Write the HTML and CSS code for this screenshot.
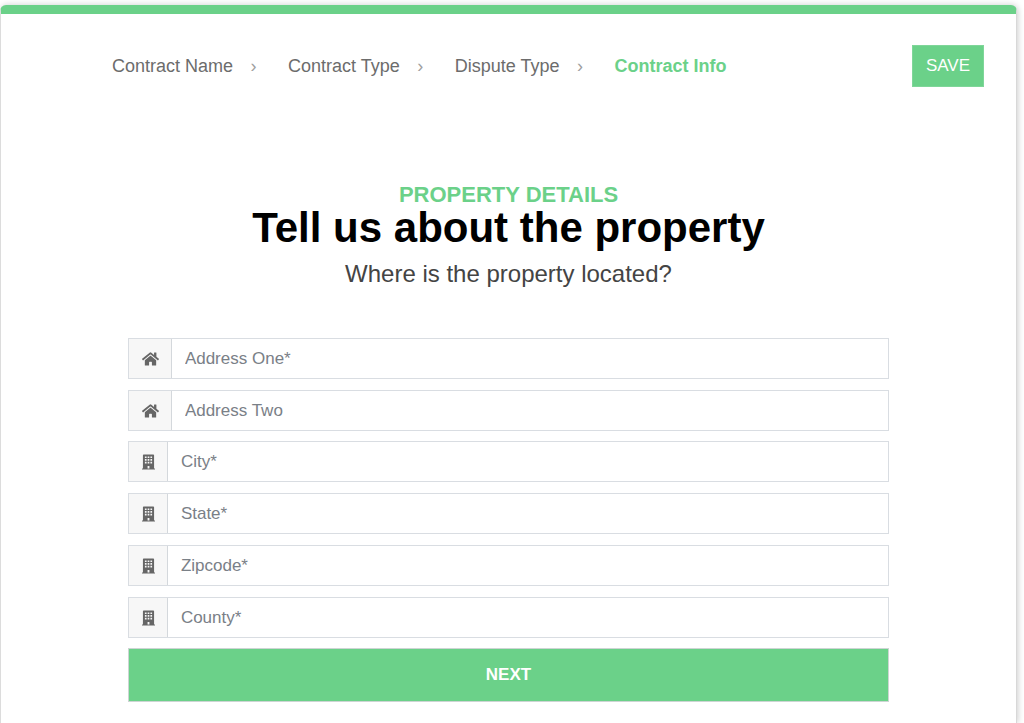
FILE: index.html
```html
<!DOCTYPE html>
<html lang="en">
<head>
<meta charset="utf-8">
<meta name="viewport" content="width=device-width, initial-scale=1">
<title>Property Details</title>
<link rel="stylesheet" href="styles.css">
</head>
<body>
<svg class="sprite" aria-hidden="true">
  <symbol id="home" viewBox="0 0 576 512"><path d="M280.37 148.26L96 300.11V464a16 16 0 0 0 16 16l112.06-.29a16 16 0 0 0 15.92-16V368a16 16 0 0 1 16-16h64a16 16 0 0 1 16 16v95.64a16 16 0 0 0 16 16.05L464 480a16 16 0 0 0 16-16V300L295.67 148.26a12.19 12.19 0 0 0-15.3 0zM571.6 251.47L488 182.56V44.05a12 12 0 0 0-12-12h-56a12 12 0 0 0-12 12v72.61L318.47 43a48 48 0 0 0-61 0L4.34 251.47a12 12 0 0 0-1.6 16.9l25.5 31A12 12 0 0 0 45.15 301l235.22-193.74a12.19 12.19 0 0 1 15.3 0L530.9 301a12 12 0 0 0 16.9-1.6l25.5-31a12 12 0 0 0-1.7-16.93z"/></symbol>
  <symbol id="building" viewBox="0 0 448 512"><path fill-rule="evenodd" d="M436 480h-20V24c0-13-11-24-24-24H56C43 0 32 11 32 24v456H12c-7 0-12 5-12 12v20h448v-20c0-7-5-12-12-12zM100 64h58v58h-58zM195 64h58v58h-58zM290 64h58v58h-58zM100 156h58v58h-58zM195 156h58v58h-58zM290 156h58v58h-58zM100 248h58v58h-58zM195 248h58v58h-58zM290 248h58v58h-58zM192 392h64v88h-64z"/></symbol>
</svg>
<main class="card">
  <header class="top">
    <nav class="steps" aria-label="Progress">
      <a class="step" href="#name">Contract Name</a>
      <span class="sep" aria-hidden="true">›</span>
      <a class="step" href="#type">Contract Type</a>
      <span class="sep" aria-hidden="true">›</span>
      <a class="step" href="#dispute">Dispute Type</a>
      <span class="sep" aria-hidden="true">›</span>
      <a class="step current" href="#info" aria-current="step">Contract Info</a>
    </nav>
    <button class="save" type="button">SAVE</button>
  </header>

  <section class="intro">
    <p class="eyebrow">PROPERTY DETAILS</p>
    <h1 class="title">Tell us about the property</h1>
    <p class="lead">Where is the property located?</p>
  </section>

  <form class="form">
    <div class="group">
      <div class="field">
        <label class="addon" for="address1"><svg class="icon home" role="img" aria-label="Address one"><use href="#home"/></svg></label>
        <input class="input" id="address1" type="text" placeholder="Address One*">
      </div>
      <div class="field">
        <label class="addon" for="address2"><svg class="icon home" role="img" aria-label="Address two"><use href="#home"/></svg></label>
        <input class="input" id="address2" type="text" placeholder="Address Two">
      </div>
    </div>
    <div class="group">
      <div class="field">
        <label class="addon" for="city"><svg class="icon" role="img" aria-label="City"><use href="#building"/></svg></label>
        <input class="input" id="city" type="text" placeholder="City*">
      </div>
      <div class="field">
        <label class="addon" for="state"><svg class="icon" role="img" aria-label="State"><use href="#building"/></svg></label>
        <input class="input" id="state" type="text" placeholder="State*">
      </div>
      <div class="field">
        <label class="addon" for="zipcode"><svg class="icon" role="img" aria-label="Zipcode"><use href="#building"/></svg></label>
        <input class="input" id="zipcode" type="text" placeholder="Zipcode*">
      </div>
      <div class="field">
        <label class="addon" for="county"><svg class="icon" role="img" aria-label="County"><use href="#building"/></svg></label>
        <input class="input" id="county" type="text" placeholder="County*">
      </div>
    </div>
    <button class="next" type="submit">NEXT</button>
  </form>
</main>
</body>
</html>
```
FILE: styles.css
```css
* {
  box-sizing: border-box;
}

body {
  margin: 0;
  padding: 5px 7px 0 0;
  min-height: 100vh;
  display: flex;
  background: #fff;
  color: #666;
  font-family: "Liberation Sans", Arial, sans-serif;
  font-size: 17px;
}

.sprite {
  display: none;
}

.card {
  flex: 1;
  padding-bottom: 21px;
  border-left: 1px solid #dcdcdc;
  border-top: 9px solid #6bd189;
  border-right: 1px solid #d8d8d8;
  border-radius: 6px 6px 0 0;
  background: #fff;
  box-shadow: 1px 0 6px rgba(0, 0, 0, 0.2);
}

.top {
  display: flex;
  align-items: center;
  justify-content: space-between;
  padding: 31px 32px 0 111px;
}

.steps {
  display: flex;
  align-items: center;
  font-size: 18px;
  line-height: 24px;
}

.step {
  color: #6c6c6c;
  text-decoration: none;
}

.current {
  color: #6bd189;
  font-weight: 700;
}

.sep {
  width: 55px;
  padding-right: 14px;
  color: #a0a0a0;
  text-align: center;
}

.save {
  padding: 0 13px;
  border: 1px solid #7fd699;
  background: #6bd189;
  color: #fff;
  font: inherit;
  line-height: 40px;
}

.intro {
  margin-top: 95px;
  text-align: center;
}

.eyebrow {
  margin: 0;
  color: #6bd189;
  font-size: 22px;
  font-weight: 700;
  line-height: 26px;
}

.title {
  margin: 0;
  color: #000;
  font-size: 42px;
  font-weight: 700;
  line-height: 40px;
}

.lead {
  margin: 12px 0 0;
  color: #444;
  font-size: 24px;
  line-height: 28px;
}

.form {
  display: grid;
  gap: 10px;
  width: 75%;
  margin: 50px auto 0;
}

.group {
  display: grid;
  gap: 11px;
}

.field {
  display: flex;
  border: 1px solid #d9dde2;
}

.addon {
  display: flex;
  align-items: center;
  padding: 0 12px 0 13px;
  border-right: 1px solid #d4d8dc;
  background: #f7f7f7;
}

.icon {
  width: 13px;
  height: 16px;
  fill: #666;
}

.home {
  width: 17px;
}

.input {
  flex: 1;
  min-width: 0;
  height: 39px;
  padding: 0 13px;
  border: 0;
  background: #fff;
  color: #444;
  font: inherit;
}

.input::placeholder {
  color: #7a8087;
  opacity: 1;
}

.next {
  padding: 0;
  border: 1px solid #cdd5d3;
  background: #6bd189;
  color: #fff;
  font: inherit;
  font-weight: 700;
  line-height: 52px;
}
```
